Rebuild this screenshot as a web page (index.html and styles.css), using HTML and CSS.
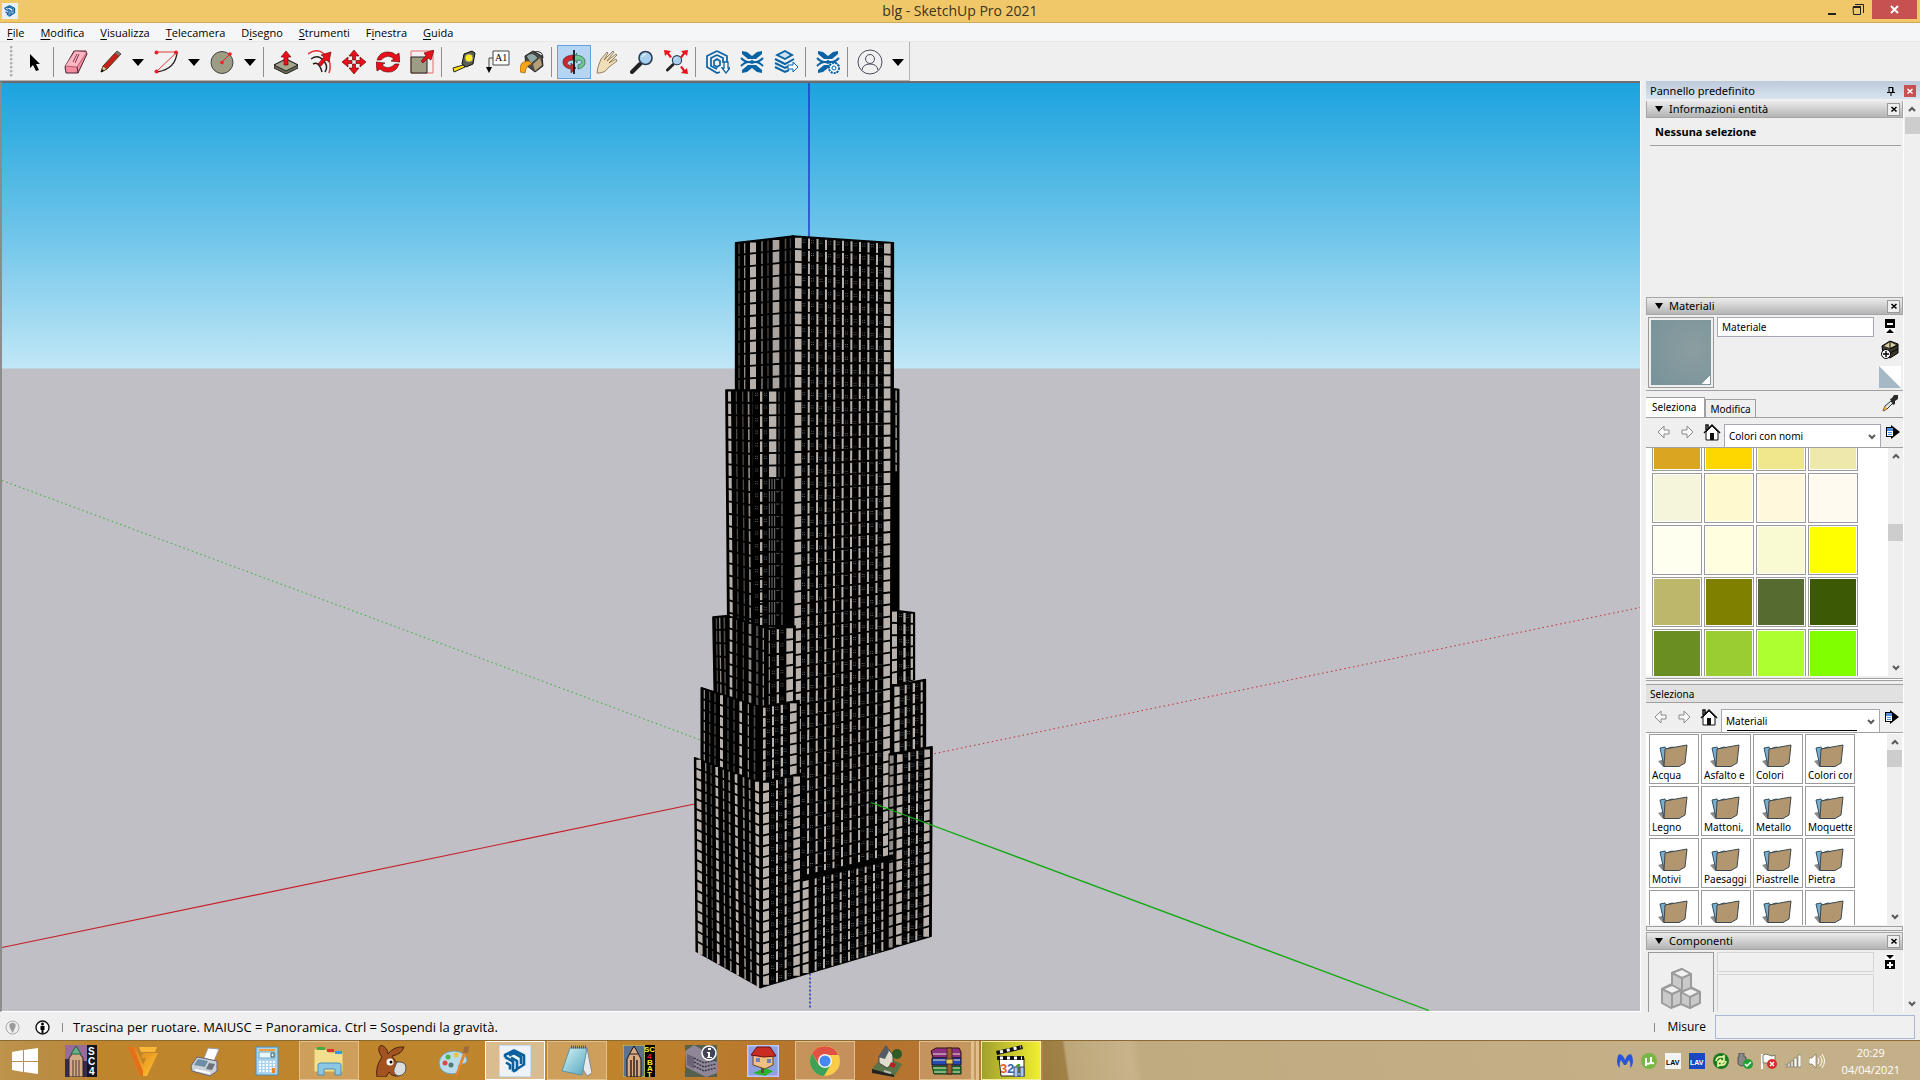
FILE: index.html
```
<!DOCTYPE html>
<html lang="it">
<head>
<meta charset="utf-8">
<title>blg - SketchUp Pro 2021</title>
<link rel="stylesheet" href="styles.css">
</head>
<body>
<svg class="defs" aria-hidden="true">
  <defs>
    <linearGradient id="sky" x1="0" y1="0" x2="0" y2="1">
      <stop offset="0" stop-color="#1ca3de"/><stop offset=".5" stop-color="#6ac3e9"/><stop offset="1" stop-color="#c0e7f6"/>
    </linearGradient>
    <linearGradient id="glass" x1="0" y1="0" x2="1" y2="1">
      <stop offset="0" stop-color="#d9f3f6"/><stop offset="1" stop-color="#4fa6bd"/>
    </linearGradient>
    <linearGradient id="gold" x1="0" y1="0" x2="1" y2="1">
      <stop offset="0" stop-color="#d9761c"/><stop offset="1" stop-color="#ffc52e"/>
    </linearGradient>
  </defs>
  <symbol id="logo" viewBox="0 0 24 24">
    <g fill="none" stroke="#0a5f9f" stroke-width="2.6" stroke-linejoin="round">
      <path d="M2 8v-2l9-4.500l10 5v9l-7 4.500v-8l-6-3.500"/><path d="M2 8l8 4.500v10"/><path d="M3 13.500l4 2.500v4.500M6 6.500l5-2.500l7 4v7"/><path d="M10 22.500l4-2"/>
    </g>
  </symbol>
  <symbol id="folder" viewBox="0 0 30 23">
    <path d="M0 17l7-2v8H5z" fill="#8b8b8b"/>
    <path d="M2 4l5-1l1 2l6-2l4 1l-8 18H6z" fill="#76afd3" stroke="#33505f"/>
    <path d="M7 5l22-4l-2 18l-6 3.500H6z" fill="#b29670" stroke="#3b4a50"/>
  </symbol>
  <symbol id="prev" viewBox="0 0 14 14"><path d="M1 7l6-6v4h5v4H7v4z" fill="#f8f8f8" stroke="#8a8a8a"/></symbol>
  <symbol id="next" viewBox="0 0 14 14"><path d="M13 7L7 1v4H2v4h5v4z" fill="#f8f8f8" stroke="#8a8a8a"/></symbol>
  <symbol id="home" viewBox="0 0 18 18">
    <path d="M3 9v8h12V9L9 3z" fill="#fff" stroke="#111"/><path d="M1 10L9 2l8 8M5 6V2H3v5" fill="none" stroke="#111" stroke-width="1.500"/><path d="M7 10h4v7H7z" fill="#111"/>
  </symbol>
  <symbol id="detail" viewBox="0 0 14 14">
    <path d="M0 2h5V0l9 7l-9 7v-2H0z" fill="#000"/><path d="M1 3h6v8H1z" fill="#fff"/><path d="M1 3h6v3H1z" fill="#4a8fe0"/><path d="M2 7.500h4M2 9.500h4" stroke="#4a8fe0"/>
  </symbol>
  <symbol id="up" viewBox="0 0 8 7"><path d="M1 5l3-3l3 3" fill="none" stroke="#5a5a5a" stroke-width="2"/></symbol>
  <symbol id="down" viewBox="0 0 8 7"><path d="M1 2l3 3l3-3" fill="none" stroke="#5a5a5a" stroke-width="2"/></symbol>
  <symbol id="cross" viewBox="0 0 8 8"><path d="M1.500 2l5 4.500M6.500 2l-5 4.500" stroke="currentColor" stroke-width="1.600"/></symbol>
  <symbol id="warehouse" viewBox="0 0 24 24">
    <path d="M2 1l5 1l5 4l5-4l5-1v3l-6 5H8L2 4zM2 23l5-1l5-4l5 4l5 1v-3l-6-5H8l-6 5z" fill="#0a63a5"/>
    <path d="M1 8q6 6 11 3q5 3 11-3M1 16q6-6 11-3q5-3 11 3" fill="none" stroke="#0a63a5" stroke-width="2"/>
  </symbol>
  <symbol id="lens" viewBox="0 0 24 24">
    <path d="M2 22l8-8" stroke="#222" stroke-width="4" stroke-linecap="round"/><circle cx="15.500" cy="8" r="6.500" fill="#a8d0ee" stroke="#2a3d55" stroke-width="1.600"/><path d="M12 7q1-3 4-3" stroke="#fff" fill="none"/>
  </symbol>
</svg>

<div class="window">
  <header class="titlebar">
    <svg class="app-icon" viewBox="0 0 16 16"><path d="M0 0h16v16H0z" fill="#e9f0f8"/><use href="#logo" x="2" y="2" width="12" height="12"/></svg>
    <h1 class="title">blg - SketchUp Pro 2021</h1>
    <div class="window-controls">
      <button class="control" aria-label="Riduci a icona"><svg width="10" height="12"><path d="M1 9h8v2H1z" fill="#222"/></svg></button>
      <button class="control" aria-label="Ripristina"><svg width="12" height="12" fill="none" stroke="#222"><path d="M1 3.500h7.500v7H1.500z"/><path d="M1 3h8" stroke-width="2"/><path d="M3 .5h8.500V9"/></svg></button>
      <button class="control control-close" aria-label="Chiudi"><svg width="9" height="9"><path d="M1 1l7 7M8 1L1 8" stroke="#fff" stroke-width="2"/></svg></button>
    </div>
  </header>

  <nav class="menubar">
    <button><u>F</u>ile</button><button><u>M</u>odifica</button><button><u>V</u>isualizza</button><button><u>T</u>elecamera</button><button>D<u>i</u>segno</button><button><u>S</u>trumenti</button><button>F<u>i</u>nestra</button><button><u>G</u>uida</button>
  </nav>

  <div class="toolbar">
    <div class="tools">
      <span class="grip"></span>
      <button class="tool" aria-label="Seleziona"><svg viewBox="0 0 24 24"><path d="M8 4v14l3-3l3 6l3-1l-3-6h4z" fill="#000"/></svg></button>
      <span class="sep"></span>
      <button class="tool" aria-label="Gomma"><svg viewBox="0 0 24 24"><path d="M10 1h12l1 3l-9 19H2l-1-6z" fill="#f58ba0" stroke="#4b2530"/><path d="M1 16l12 1l10-15l-12-1z" fill="#ffb5c3" stroke="#7d3b48" stroke-width=".6"/><path d="M13 17l1 6" stroke="#4b2530"/><path d="M11 13l4-9M9 12l4-8" stroke="#82404d"/></svg></button>
      <button class="tool" aria-label="Linee"><svg viewBox="0 0 24 24"><path d="M3 22l2-6L19 1l4 3L9 19z" fill="#c8201a" stroke="#431"/><path d="M3 22l2-6l4 3z" fill="#e2c890" stroke="#431" stroke-width=".6"/><path d="M3 22l1-3l2 2z"/><path d="M17 3l4 3l2-2l-4-3z" fill="#777"/></svg></button>
      <button class="drop" aria-label="Altre linee"></button>
      <button class="tool" aria-label="Arco"><svg viewBox="0 0 24 24" fill="none"><path d="M23 2q-1 17-20 20" stroke="#222" stroke-width="1.300"/><path d="M2 2h21L2 22" stroke="#e23a3a"/><g fill="#e8202a"><circle cx="2.500" cy="2.500" r="2"/><circle cx="22" cy="2.500" r="2"/><circle cx="2.500" cy="21.500" r="2"/></g></svg></button>
      <button class="drop" aria-label="Altri archi"></button>
      <button class="tool" aria-label="Cerchio"><svg viewBox="0 0 24 24"><circle cx="12" cy="12.500" r="11" fill="#9d9c85" stroke="#444"/><path d="M12 12l8-8" stroke="#e22"/><circle cx="12" cy="12.500" r="1.800" fill="#e22"/><circle cx="20" cy="4" r="1.800" fill="#e22"/></svg></button>
      <button class="drop" aria-label="Altre forme"></button>
      <span class="sep"></span>
      <button class="tool" aria-label="Spingi/tira"><svg viewBox="0 0 24 24"><path d="M0 15l12-6l12 6v3l-12 6l-12-6z" fill="#6b6a58" stroke="#222"/><path d="M0 15l12-6l12 6l-12 6z" fill="#a5a48d" stroke="#222"/><path d="M12 1l5 6h-3v8h-4V7H7z" fill="#e8101a" stroke="#600" stroke-width=".6"/></svg></button>
      <button class="tool" aria-label="Seguimi"><svg viewBox="0 0 24 24" fill="none"><path d="M0 4q8-6 15-1q10 8 6 20" stroke="#e8303a" stroke-width="1.500"/><path d="M3 9q7-5 12 1q6 6 2 12M5 14q6-3 9 8" stroke="#222" stroke-width="1.500"/><path d="M10 14l6-7l-3-2l10-3l-2 10l-3-2l-5 6z" fill="#e8101a" stroke="#500" stroke-width=".6"/></svg></button>
      <button class="tool" aria-label="Sposta"><svg viewBox="0 0 24 24" fill="#e8101a" stroke="#500" stroke-width=".6"><path d="M12 0l5 6h-3.500v4h-3V6H7zM12 24l5-6h-3.500v-4h-3v4H7zM0 12l6-5v3.500h4v3H6V17zM24 12l-6-5v3.500h-4v3h4V17z"/></svg></button>
      <button class="tool" aria-label="Ruota"><svg viewBox="0 0 24 24" fill="#e8101a" stroke="#500" stroke-width=".6"><path d="M1 10q3-9 12-8q4 0 7 3l3-2l1 9l-9-1l3-2q-6-6-13 1zM23 14q-3 9-12 8q-4 0-7-3l-3 2l-1-9l9 1l-3 2q6 6 13-1z"/></svg></button>
      <button class="tool" aria-label="Scala"><svg viewBox="0 0 24 24"><path d="M1 1h22v22H1z" fill="none" stroke="#e66"/><path d="M1 7h16v16H1z" fill="#9d9c85" stroke="#222"/><path d="M11 11l5-5l-2-3l10-3l-3 10l-3-2l-5 5z" fill="#e8101a" stroke="#500" stroke-width=".6"/></svg></button>
      <span class="sep"></span>
      <button class="tool" aria-label="Metro"><svg viewBox="0 0 24 24"><path d="M12 4l8-3l3 2l-2 11l-7 3l-4-3z" fill="#5b5b55" stroke="#111"/><circle cx="17" cy="8" r="4" fill="#ffee10" stroke="#888"/><path d="M2 22l-1-4l10-3l2 2z" fill="#ffe200" stroke="#222"/></svg></button>
      <button class="tool" aria-label="Testo"><svg viewBox="0 0 24 24"><path d="M7 1h16v14H7z" fill="#fff" stroke="#444"/><text x="9" y="11" class="text-icon">A1</text><path d="M7 8H3v10" fill="none" stroke="#444"/><path d="M0 17h6l-3 6z"/></svg></button>
      <button class="tool" aria-label="Secchiello"><svg viewBox="0 0 24 24"><path d="M5 6l8-5l9 5l1 10l-8 6l-9-7z" fill="#4c4d44" stroke="#222"/><path d="M6 6q7-6 12 2l-7 6q-3-5-5-8z" fill="#8fa7a5" stroke="#333"/><path d="M13 14l7-6l2 7l-7 6z" fill="#b7a078"/><path d="M14 2q9-2 9 6" fill="none" stroke="#222"/><path d="M0 22q-1-12 9-11l3 3q-6 1-7 9z" fill="#f5a41c" stroke="#8a5300" stroke-width=".6"/></svg></button>
      <span class="sep"></span>
      <button class="tool tool-active" aria-label="Orbita" aria-pressed="true"><svg viewBox="0 0 24 24"><path d="M11 5Q0 6 1 13q1 5 8 6v4l5-5l-5-5v3q-4-1-4-3q1-3 6-3z" fill="#c92a30" stroke="#511" stroke-width=".6"/><path d="M14 5q10 1 9 8q-1 5-7 6v-4q4-1 4-3q0-2-5-2v3l-4-5l4-5z" fill="#6fc794" stroke="#153" stroke-width=".6"/><path d="M12 0v24" stroke="#000" stroke-width="1.600"/></svg></button>
      <button class="tool" aria-label="Panoramica"><svg viewBox="0 0 24 24"><path d="M1 23l1-6l3-8l6-7l1 1l-4 7l9-9l1 1l-7 9l9-7l1 1l-8 8l7-4l1 2l-8 6q-4 6-9 6z" fill="#f1dfb8" stroke="#7a6648" stroke-width=".8"/></svg></button>
      <button class="tool" aria-label="Zoom"><svg><use href="#lens"/></svg></button>
      <button class="tool" aria-label="Zoom estensioni"><svg viewBox="0 0 24 24"><use href="#lens" x="2" y="4" width="17" height="18"/><path d="M0 0l7 1l-2 2l3 4l-2 1l-3-4l-2 2zM24 0l-7 1l2 2l-3 4l2 1l3-4l2 2zM24 24l-7-1l2-2l-3-4l2-1l3 4l2-2z" fill="#e8101a"/></svg></button>
      <span class="sep"></span>
      <button class="tool" aria-label="3D Warehouse"><svg viewBox="0 0 24 24" fill="none" stroke="#0a63a5" stroke-width="1.700"><path d="M11 1l10 5v8M14 22l-3 1L1 17V6l10-5M11 5l6 3v5M11 19l-6-3V8l6-3"/><path d="M11 9l3 2v4l-3 2l-3-2v-4z"/><path d="M18 12h4v6h2l-4 5l-4-5h2z" fill="#fff" stroke-width="1.300"/></svg></button>
      <button class="tool" aria-label="Extension Warehouse"><svg><use href="#warehouse"/></svg></button>
      <button class="tool" aria-label="Invia a LayOut"><svg viewBox="0 0 24 24"><path d="M1 5l10-5l9 5l-9 5z" fill="#0a63a5"/><path d="M5 5l6-3l5 3l-5 3z" fill="#cfe2f1"/><path d="M1 9l10 5l9-5M1 13l10 5l4-2M1 17l10 5l4-2" fill="none" stroke="#0a63a5" stroke-width="2"/><path d="M14 15h5v-3l5 5l-5 5v-3h-5z" fill="#fff" stroke="#0a63a5"/></svg></button>
      <span class="sep"></span>
      <button class="tool" aria-label="Gestione estensioni"><svg viewBox="0 0 24 24"><use href="#warehouse"/><circle cx="18" cy="18" r="5" fill="#fff" stroke="#0a63a5" stroke-width="2" stroke-dasharray="2 1"/><circle cx="18" cy="18" r="2" fill="none" stroke="#0a63a5"/></svg></button>
      <span class="sep"></span>
      <button class="tool" aria-label="Account"><svg class="account" viewBox="0 0 26 26" fill="none" stroke="#4b4b5a"><circle cx="13" cy="13" r="12"/><circle cx="13" cy="10" r="4.500"/><path d="M5 21q1-6 8-6t8 6"/></svg></button>
      <button class="drop" aria-label="Menu account"></button>
    </div>
  </div>

  <main class="workspace">
    <section class="viewport" aria-label="Modello">
      <svg class="scene" viewBox="2 83 1638 929" preserveAspectRatio="xMidYMid slice">
        <path d="M0 0h1700v1100H0z" fill="#bfbfc5"/>
        <rect x="0" y="83" width="1700" height="286" fill="url(#sky)"/>
        <g fill="none">
          <path d="M809 83v155" stroke="#1a3fc8" stroke-width="1.500"/>
          <path d="M810 970v40" stroke="#2a2ac8" stroke-width="1.500" stroke-dasharray="2 2"/>
          <path d="M2 481l700 260" stroke="#2ab52a" stroke-dasharray="1.500 3"/>
          <path d="M930 755l710-147" stroke="#c8283a" stroke-dasharray="1.500 3"/>
          <path d="M2 948l695-144" stroke="#c81e28" stroke-width="1.200"/>
        </g>
        <g id="tower" transform="translate(680 220) scale(.333333)"></g>
        <path d="M871 803l558 208" fill="none" stroke="#12a812" stroke-width="1.300"/>
      </svg>
    </section>

    <aside class="dock">
      <header class="dock-title"><h2>Pannello predefinito</h2>
        <svg class="pin" viewBox="0 0 8 9"><path d="M2 .5h4v5M2 0v5M0 5.500h8M4 6v3M5.500 0v5" fill="none" stroke="#000"/></svg>
        <button class="dock-close" aria-label="Chiudi pannello"><svg width="8" height="8"><use href="#cross"/></svg></button></header>
      <div class="dock-body">
        <div class="trays">
          <section class="tray tray-info">
            <header class="tray-head"><h3>Informazioni entità</h3><button aria-label="Chiudi"><svg width="8" height="8"><use href="#cross"/></svg></button></header>
            <p class="entity">Nessuna selezione</p>
          </section>

          <section class="tray">
            <header class="tray-head"><h3>Materiali</h3><button aria-label="Chiudi"><svg width="8" height="8"><use href="#cross"/></svg></button></header>
            <div class="material">
              <div class="preview"><span class="preview-fill"></span></div>
              <input class="field" aria-label="Nome materiale" value="Materiale">
              <div class="side-icons">
                <svg width="10" height="15"><path d="M0 0h10v9H0z"/><path d="M2 4h6v2H2z" fill="#fff"/><path d="M0 9h10v6H0z" fill="#fff"/><path d="M1 14l4-4l4 4z"/></svg>
                <svg width="18" height="20" viewBox="0 0 18 20"><path d="M1 6l8-5l8 3v9l-8 5l-7-4z" fill="#3b382b" stroke="#000"/><path d="M3 6l6-4l6 3l-6 3z" fill="#d8d0a5"/><path d="M9 9l8-4M9 13l8-4M9 2v6" stroke="#000"/><circle cx="5" cy="14" r="4.500" fill="#fff" stroke="#000"/><path d="M2 14h6M5 11v6" stroke="#000" stroke-width="1.400"/></svg>
                <svg width="22" height="22"><path d="M0 0h22v22z" fill="#fff"/><path d="M0 0l22 22H0z" fill="#a4b8c6"/></svg>
              </div>
            </div>
            <div class="tabs">
              <button class="tab tab-on">Seleziona</button><button class="tab">Modifica</button>
              <svg class="dropper" viewBox="0 0 17 17"><path d="M1 16l2-5l6-5l2 2l-6 6z" fill="#dfe6ea" stroke="#333"/><path d="M1 16l2-5l2 3z" fill="#f0a020"/><path d="M8 4l2-1l2-3h4v4l-3 2v3l-2 1z" fill="#2b2b2b"/></svg>
            </div>
            <div class="picker">
              <button aria-label="Indietro"><svg width="14" height="14"><use href="#prev"/></svg></button>
              <button aria-label="Avanti"><svg width="14" height="14"><use href="#next"/></svg></button>
              <button aria-label="Nel modello"><svg width="18" height="18"><use href="#home"/></svg></button>
              <span class="combo"><select aria-label="Raccolta"><option>Colori con nomi</option></select><svg width="8" height="7"><use href="#down"/></svg></span>
              <button aria-label="Dettagli"><svg width="14" height="14"><use href="#detail"/></svg></button>
            </div>
            <div class="list list-swatches">
              <div class="swatches" id="swatches"></div>
              <div class="scroll"><svg width="8" height="7"><use href="#up"/></svg><span class="thumb thumb-mid"></span><svg width="8" height="7"><use href="#down"/></svg></div>
            </div>
            <div class="splitter"></div>
            <h4 class="subhead">Seleziona</h4>
            <div class="picker picker-second">
              <button aria-label="Indietro"><svg width="14" height="14"><use href="#prev"/></svg></button>
              <button aria-label="Avanti"><svg width="14" height="14"><use href="#next"/></svg></button>
              <button aria-label="Nel modello"><svg width="18" height="18"><use href="#home"/></svg></button>
              <span class="combo combo-focus"><select aria-label="Cartella"><option>Materiali</option></select><svg width="8" height="7"><use href="#down"/></svg></span>
              <button aria-label="Dettagli"><svg width="14" height="14"><use href="#detail"/></svg></button>
            </div>
            <div class="list list-folders">
              <div class="folders" id="folders"></div>
              <div class="scroll"><svg width="8" height="7"><use href="#up"/></svg><span class="thumb"></span><svg width="8" height="7"><use href="#down"/></svg></div>
            </div>
            <div class="splitter splitter-low"></div>
          </section>

          <section class="tray tray-components">
            <header class="tray-head"><h3>Componenti</h3><button aria-label="Chiudi"><svg width="8" height="8"><use href="#cross"/></svg></button></header>
            <div class="material">
              <div class="preview preview-empty"><svg width="42" height="42" viewBox="0 0 42 42" stroke="#9b9b9b" stroke-width="2" stroke-linejoin="round"><path d="M12 6l10-4l9 5v13l9 5v11l-10 5l-9-4l-10 4l-9-5V22l10-5z" fill="#c9c9c9"/><path d="M12 6l10-4l9 5l-9 4zM2 22l10-4l9 5l-9 4zM21 25l10-4l9 4l-10 5z" fill="#f2f2f2"/><path d="M22 11v12M12 27v13M30 30v11M21 23v13" fill="none"/></svg></div>
              <div class="fields"><input class="field" aria-label="Nome componente" disabled><textarea class="field field-tall" aria-label="Descrizione" disabled></textarea></div>
              <div class="side-icons"><svg width="10" height="15"><path d="M0 6h10v9H0z"/><path d="M2 10h6v2H2z" fill="#fff"/><path d="M4 8h2v6H4z" fill="#fff"/><path d="M0 0h10v6H0z" fill="#fff"/><path d="M1 1h8l-4 4z"/></svg></div>
            </div>
          </section>
        </div>
        <div class="scroll scroll-main"><svg width="8" height="7"><use href="#up"/></svg><span class="thumb"></span><svg width="8" height="7"><use href="#down"/></svg></div>
      </div>
    </aside>
  </main>

  <footer class="status">
    <svg class="geo" width="15" height="15" viewBox="0 0 15 15"><circle cx="7.500" cy="7.500" r="6.500" fill="none" stroke="#a8a8a8"/><path d="M7.500 13L4.500 7V4l3-1.500l3 1.500v3z" fill="#9a9a9a"/></svg>
    <svg width="15" height="15" viewBox="0 0 15 15"><circle cx="7.500" cy="7.500" r="6.500" fill="#fff" stroke="#111" stroke-width="1.400"/><circle cx="7.500" cy="4" r="1.500"/><path d="M5.500 6h4v4h-1v3h-2v-3h-1z"/></svg>
    <span class="rule"></span>
    <p class="hint">Trascina per ruotare. MAIUSC = Panoramica. Ctrl = Sospendi la gravità.</p>
    <span class="rule"></span>
    <label for="measure">Misure</label><input id="measure" class="measure">
  </footer>
</div>

<div class="taskbar">
  <button class="start" aria-label="Start"><svg width="26" height="26" viewBox="0 0 26 26" fill="#fff"><path d="M0 4l11-2v11H0zM12 2l14-2v13H12zM0 14h11v10L0 22zM12 14h14v12l-14-2z"/></svg></button>
  <button class="task" aria-label="SimCity 4"><svg viewBox="0 0 32 32"><path d="M0 0h22v32H0z" fill="#9a6b98"/><path d="M0 14h5v18H0zM17 16h5v16h-5z" fill="#3a2a4d"/><path d="M22 0h10v32H22z" fill="#111520"/><path d="M4 13l3-4l4-8l4 8l3 4v19H4z" fill="#d0ab84" stroke="#2d1e25"/><path d="M6 9l5-8l5 8z" fill="#66b087" stroke="#264"/><path d="M8 15v17M11 15v17M14 15v17" stroke="#4e3032"/><g class="pixel-text"><text x="23" y="10">S</text><text x="23" y="20">C</text><text x="24" y="30">4</text></g></svg></button>
  <button class="task" aria-label="Vegas"><svg viewBox="0 0 32 32"><path d="M1 2h8l7 18l3-7h-5l2-5h15l-11 23h-7z" fill="url(#gold)"/><path d="M1 2h5l10 24v5h-3z" fill="#e36f1b"/><path d="M12 2h18l-2 5H14z" fill="#f8b63a"/></svg></button>
  <button class="task" aria-label="Fax"><svg viewBox="0 0 32 32"><path d="M15 13l4-10l11 1l-5 12z" fill="#fff" stroke="#99a"/><path d="M2 21l6-9l20 4v10l-7 5l-18-5z" fill="#cbd1d6" stroke="#667"/><path d="M9 14l10 2l-3 6l-11-2z" fill="#6c8ea8"/><path d="M20 18l6 1l-3 6l-6-1z" fill="#6b7278"/><path d="M6 25l15 3" stroke="#fff" stroke-width="2"/></svg></button>
  <button class="task" aria-label="Calcolatrice"><svg viewBox="0 0 32 32"><path d="M5 2h22v28H5z" fill="#a8d3f0" stroke="#4b8cb8"/><path d="M8 4h16v2H8z" fill="#f49b3a"/><path d="M8 7h16v6H8z" fill="#e8f5fb" stroke="#7ab"/><g stroke="#fff" stroke-width="2" stroke-dasharray="2 1.500"><path d="M8 17h16M8 20h16M8 23h16M8 26h16"/></g><path d="M21 23h3v5h-3z" fill="#f08020"/><path d="M20 8h3v4h-3z" fill="none" stroke="#357"/></svg></button>
  <button class="task task-open" aria-label="Esplora file"><svg viewBox="0 0 32 32"><path d="M1 4h12l2 3h15v20H1z" fill="#f3df8e" stroke="#c8a64a"/><path d="M4 2h8v3H4z" fill="#4a4"/><path d="M14 4h7v3h-7z" fill="#d33"/><path d="M22 6h7v3h-7z" fill="#39d"/><path d="M5 30V20q0-2 3-2h17q3 0 3 2v10h-6v-6H11v6z" fill="#8cc8e6" stroke="#4a90b8"/></svg></button>
  <button class="task" aria-label="eMule"><svg viewBox="0 0 32 32"><path d="M7 12Q1 4 6 0q7 3 7 9q6-8 16-7q-2 7-12 9l4 6q9 0 8 7q-1 8-9 7q-5-1-6-4l-3 5H2q-2-10 5-20z" fill="#a3531f" stroke="#4a2410"/><path d="M22 17q9-1 9 6t-8 8q-5-2-4-7z" fill="#ddd" stroke="#555"/><circle cx="15" cy="17" r="3.500" fill="#fff"/><circle cx="16" cy="17" r="1.500"/></svg></button>
  <button class="task" aria-label="Paint"><svg viewBox="0 0 32 32"><path d="M2 18Q3 7 17 6q12 1 13 9q0 4-6 4q-4 1-2 5q1 4-6 5Q3 29 2 18z" fill="#b9dbea" stroke="#6ea0b8"/><circle cx="8" cy="18" r="2.500" fill="#d84a4a"/><circle cx="11" cy="12" r="2.500" fill="#4eb04e"/><circle cx="19" cy="10" r="2.500" fill="#efc43c"/><circle cx="14" cy="20" r="2.500" fill="#577"/><path d="M18 31L26 8l3 1l-9 22z" fill="#e8842a"/><path d="M26 8l1-6l5-1l-1 7z" fill="#9b6a3e"/></svg></button>
  <button class="task task-front" aria-label="SketchUp"><svg viewBox="0 0 32 32"><path d="M0 0h32v32H0z" fill="#eef3fa" stroke="#9cc4e8"/><use href="#logo" x="4" y="4" width="24" height="24"/></svg></button>
  <button class="task task-open" aria-label="Blocco note"><svg viewBox="0 0 32 32"><path d="M9 3h17l5 25l-5 3z" fill="#e6eaec" stroke="#889"/><path d="M9 3h17l-5 27L1 26z" fill="url(#glass)" stroke="#5c93a3"/><path d="M10 2h16" stroke="#555" stroke-width="3" stroke-dasharray="1 1"/></svg></button>
  <button class="task" aria-label="SC4 BAT"><svg viewBox="0 0 32 32"><path d="M0 0h22v32H0z" fill="#5a7390" stroke="#f0e020"/><path d="M22 0h10v32H22z"/><path d="M4 14l3-6l4-7l4 7l3 6v18H4z" fill="#d8ab84" stroke="#181018"/><path d="M8 15v17M11 11v21M14 15v17" stroke="#201820" stroke-width="1.400"/><path d="M7 9h8" stroke="#201820"/><g class="pixel-text bat"><text x="21" y="7">SC</text><text x="24" y="14" class="red">4</text><text x="24" y="20">B</text><text x="24" y="26">A</text><text x="24" y="32">T</text></g></svg></button>
  <button class="task" aria-label="Informazioni edificio"><svg viewBox="0 0 32 32"><path d="M0 0h32v32H0z" fill="#56604c"/><path d="M0 6l9-6l7 4l2 8l14 5v11l-11 4L1 22z" fill="#8f8697"/><path d="M2 9l7 3v12L2 20z" fill="#6b6276"/><path d="M9 13l10 5l12-3M9 17l10 5l12-3M9 21l10 5l12-3" stroke="#3d3848" stroke-width="1.500" fill="none" stroke-dasharray="2 1"/><circle cx="24" cy="8" r="7" fill="#445" stroke="#fff" stroke-width="1.500"/><path d="M23 3h3v2h-3zM22 7h3v5h2v1h-5v-1h1V8h-1z" fill="#fff"/></svg></button>
  <button class="task" aria-label="Casa"><svg viewBox="0 0 32 32"><path d="M0 0h32v32H0z" fill="#8f9fe0" stroke="#bcc7ff" stroke-width="3"/><path d="M6 28l12-5l8 3l-8 5z" fill="#28b52a"/><path d="M14 21h3v7h-3z" fill="#743"/><path d="M6 10h20v10l-8 4l-12-4z" fill="#f0bf82" stroke="#642"/><path d="M4 10l6-8h13l6 9l-12 1z" fill="#c92c22" stroke="#611"/><path d="M9 13h4v4H9zM20 14h4v4h-4z" fill="#6c80bb"/></svg></button>
  <button class="task task-open" aria-label="Chrome"><svg viewBox="0 0 32 32"><circle cx="16" cy="16" r="15" fill="#f9cd47"/><path d="M3 8.500A15 15 0 0 1 29.500 10H16l-6 9z" fill="#e05144"/><path d="M3 8.500A15 15 0 0 0 15 31l7-12l-12 1z" fill="#3ba257"/><circle cx="16" cy="16" r="7" fill="#f5f5f5"/><circle cx="16" cy="16" r="5.500" fill="#4688f1"/></svg></button>
  <button class="task" aria-label="Lot Editor"><svg viewBox="0 0 32 32"><path d="M1 24l11-13l19 8l-8 13z" fill="#5a7348"/><path d="M1 24l22 6v2L1 28z" fill="#222"/><path d="M8 12l7-11l7 9v9l-6 4l-8-5z" fill="#e0dccf" stroke="#444"/><path d="M7 12l8-12l3 6l-4 8z" fill="#555b63"/><circle cx="26" cy="9" r="5" fill="#2e5a26"/><path d="M20 17l5 2l-2 4l-5-2z" fill="#b82020"/><path d="M13 26l7 2" stroke="#bbb" stroke-width="2"/></svg></button>
  <button class="task task-open task-stack" aria-label="WinRAR"><svg viewBox="0 0 32 32"><path d="M1 6l5-3h23l2 4v6H3z" fill="#8b2f80" stroke="#311"/><path d="M2 13h29v7H2z" fill="#264bb5" stroke="#113"/><path d="M2 21h29v8H4z" fill="#268035" stroke="#131"/><path d="M3 15h27M3 23h27M4 27h26M3 9h27" stroke="#e9dfca"/><path d="M17 3h5v26h-5z" fill="#9b5c2b" stroke="#422"/><path d="M16 14h7v5h-7z" fill="#e5c94a" stroke="#433"/></svg></button>
  <button class="task task-open task-alert" aria-label="Media Player Classic"><svg viewBox="0 0 32 32"><path d="M4 13h25v18H6z" fill="#fff" stroke="#222"/><path d="M2 11h27v4H2zM1 6L27 0l1 4L2 10z" fill="#111"/><path d="M5 7l21-5M5 13h22" stroke="#fff" stroke-width="3" stroke-dasharray="3 4"/><g class="clap-text"><text x="5" y="28" fill="#e66020">3</text><text x="12" y="28" fill="#36a">2</text><text x="20" y="28" fill="#292">1</text></g><path d="M19 22h4v10h-4zM25 22h4v10h-4z" fill="#a8c8f0" stroke="#347"/></svg></button>
  <div class="desktop-strip"></div>
  <div class="systray">
    <svg viewBox="0 0 16 16"><path d="M2 1q4 0 6 6q2-6 6-6q2 3 2 7q0 5-3 7q1-5-1-8l-3 5H7L4 7q-2 3-1 8q-3-2-3-7q0-4 2-7z" fill="#2854d8"/></svg>
    <svg viewBox="0 0 16 16"><circle cx="8" cy="8" r="8" fill="#74b843"/><path d="M5 13V5v5q3 2 5-1V4v5q0 2 3 1" stroke="#fff" stroke-width="2" fill="none"/></svg>
    <svg viewBox="0 0 16 16"><path d="M0 0h16v16H0z" fill="#f3f3f3"/><text x="1" y="12" class="lav">LAV</text></svg>
    <svg viewBox="0 0 16 16"><path d="M0 0h16v16H0z" fill="#1848c0"/><text x="1" y="12" class="lav lav-light">LAV</text></svg>
    <svg viewBox="0 0 16 16"><circle cx="8" cy="8" r="8" fill="#1c7a25"/><path d="M3 8q1-5 6-4l2-1v5H6l2-2M13 8q-1 5-6 4l-2 1V9h5l-2 2" fill="none" stroke="#e3f3a0" stroke-width="1.700"/></svg>
    <svg viewBox="0 0 16 16"><path d="M2 0h5v4h2v7q-4 4-8 0V4h1z" fill="#888" stroke="#555"/><circle cx="11" cy="11" r="5" fill="#20a030"/><path d="M8 11l2 2l4-4" stroke="#fff" stroke-width="1.500" fill="none"/></svg>
    <svg viewBox="0 0 16 16"><path d="M1 1v15" stroke="#fff" stroke-width="2"/><path d="M2 2q3-2 6 0t6 0v8H2z" fill="#fff" stroke="#776"/><circle cx="11" cy="11" r="5" fill="#d82a2a"/><path d="M9 9l4 4M13 9l-4 4" stroke="#fff" stroke-width="1.500"/></svg>
    <svg viewBox="0 0 16 16" fill="#fff" stroke="#665" stroke-width=".6"><path d="M0 12h2v2H0zM3 10h2v4H3zM6 8h2v6H6zM9 5h3v9H9zM13 2h3v12h-3z"/></svg>
    <svg viewBox="0 0 16 16"><path d="M0 5h3l4-4v14l-4-4H0z" fill="#fff" stroke="#665" stroke-width=".6"/><path d="M9 5q2 3 0 6M11 3q4 5 0 10M13 1q5 7 0 14" fill="none" stroke="#fff"/></svg>
    <time class="clock"><span>20:29</span><span>04/04/2021</span></time>
  </div>
</div>
<script src="app.js"></script>
</body>
</html>
```
FILE: styles.css
```
* { box-sizing: border-box; }
body {
  margin: 0;
  height: 100vh;
  display: flex;
  flex-direction: column;
  overflow: hidden;
  background: #efefef;
  color: #000;
  font: 11px/16px "Noto Sans", "Open Sans", sans-serif;
}
h1, h2, h3, h4, p { margin: 0; font: inherit; }
button, input, select, textarea { font: inherit; color: inherit; margin: 0; }
button { padding: 0; border: 0; background: none; }
svg { display: block; flex: none; }
.defs { position: absolute; width: 0; height: 0; }
.window { flex: 1; min-height: 0; display: flex; flex-direction: column; }

/* Title bar and menus */
.titlebar {
  height: 23px;
  display: grid;
  grid-template-columns: 1fr auto 1fr;
  align-items: center;
  background: #f0c869;
  border-bottom: 1px solid #cfa95a;
}
.app-icon { width: 16px; height: 16px; margin-left: 2px; }
.title { font: 14px/22px "Open Sans", sans-serif; color: #3a3320; }
.window-controls { justify-self: end; align-self: start; display: flex; padding-right: 3px; }
.control { width: 26px; height: 19px; display: grid; place-items: center; }
.control-close { width: 45px; margin-left: 1px; background: #c75050; }
.menubar {
  height: 19px;
  display: flex;
  gap: 16px;
  padding-left: 7px;
  background: #f5f6f8;
  border-bottom: 1px solid #e6e7e9;
  font: 11px/20px "Open Sans", sans-serif;
}
.menubar button { white-space: nowrap; }
.menubar u { text-underline-offset: 2px; }

/* Toolbar */
.toolbar { height: 39px; display: flex; }
.tools {
  display: flex;
  align-items: center;
  padding: 2px 0 0 10px;
  background: #f1f1f1;
  border: solid #b5b5b5;
  border-width: 0 1px 1px 0;
}
.grip { width: 7px; height: 32px; background: radial-gradient(circle at 1px 1px, #b0b0b0 1px, transparent 2px) 0 0 / 7px 4px; }
.tool { width: 34px; height: 34px; display: grid; place-items: center; border: 1px solid transparent; }
.tool svg { width: 24px; height: 24px; }
.tool .account { width: 26px; height: 26px; }
.tool-active { background: #b5d5f5; border-color: #63a2e0; }
.drop { width: 22px; height: 34px; display: grid; place-items: center; }
.drop::before { content: ""; border: 6px solid transparent; border-top: 7px solid #000; border-bottom: 0; }
.sep { width: 8px; height: 30px; background: linear-gradient(#8f8f8f, #8f8f8f) 2px 0 / 1px 100% no-repeat; }
.text-icon { font: 10px "Liberation Serif", serif; }

/* Work area */
.workspace { flex: 1; min-height: 0; display: flex; }
.viewport { flex: 1; min-width: 0; border: solid #6d6d6d; border-width: 2px 0 0 2px; border-left-color: #8c8c8c; border-bottom: 1px solid #fff; }
.scene { width: 100%; height: 100%; }

/* Dock */
.dock { width: 280px; padding-left: 5px; display: flex; flex-direction: column; border-left: 1px solid #fff; }
.dock-title {
  height: 18px;
  display: flex;
  align-items: center;
  gap: 9px;
  padding: 2px 4px 0;
  background: linear-gradient(#bccada, #d8e4f0);
}
.dock-title h2 { flex: 1; }
.pin { width: 8px; height: 9px; }
.dock-close { width: 12px; height: 12px; display: grid; place-items: center; background: #c75050; color: #fff; }
.dock-body { flex: 1; min-height: 0; display: flex; padding-top: 2px; }
.trays { flex: 1; min-width: 0; display: flex; flex-direction: column; overflow: hidden; border-right: 1px solid #fff; font-size: 10px; }
.tray-info { height: 196px; flex: none; }
.tray-info .tray-head { height: 17px; border-top: 0; }
.tray-components { flex: 1; min-height: 0; overflow: hidden; }
.tray-head {
  height: 18px;
  display: flex;
  align-items: center;
  padding: 0 2px 0 8px;
  background: linear-gradient(#ececec, #b4b4b4);
  border: 1px solid #a5a5a5;
  font-size: 11px;
}
.tray-head::before { content: ""; border: 4px solid transparent; border-top: 6px solid #000; border-bottom: 0; }
.tray-head h3 { flex: 1; padding-left: 6px; }
.tray-head button { width: 13px; height: 13px; display: grid; place-items: center; background: #eee; border: 1px solid #999; }
.entity { margin: 0 2px 0 4px; padding: 6px 5px; height: 28px; font-size: 11px; font-weight: 700; border-bottom: 1px solid #a0a0a0; }
.material { display: flex; gap: 3px; padding: 2px 0 2px 2px; height: 76px; border-bottom: 1px solid #a0a0a0; }
.preview { width: 66px; height: 71px; padding: 2px; border: 1px solid #9a9a9a; }
.preview-fill {
  display: block;
  height: 100%;
  background: linear-gradient(135deg, transparent 50%, #fff 50%) right 1px bottom 1px / 8px 8px no-repeat, radial-gradient(circle at 70% 45%, #8c9da0, #78949a 90%);
}
.preview-empty { display: grid; place-items: center; border-bottom: 0; }
.field { flex: 1; min-width: 0; height: 20px; padding: 0 4px; background: #fff; border: 1px solid #a5a8b0; border-radius: 0; resize: none; }
.fields { flex: 1; min-width: 0; display: flex; flex-direction: column; gap: 2px; }
.fields .field { flex: none; width: 100%; background: #f0f0f0; border-color: #d5d5d5; }
.fields .field-tall { height: 52px; }
.side-icons { width: 26px; display: flex; flex-direction: column; align-items: center; gap: 6px; padding-top: 2px; }
.tray-components .material { border-bottom: 0; }
.tabs { height: 27px; display: flex; align-items: flex-end; border-bottom: 1px solid #a0a0a0; }
.tab { height: 18px; padding: 0 4px; border: 1px solid #a0a0a0; border-bottom: 0; }
.tab-on { height: 20px; padding: 0 8px 2px 6px; background: #fff; border-left: 0; }
.dropper { width: 17px; height: 17px; margin: 0 4px 5px auto; }
.picker { height: 30px; display: flex; align-items: center; gap: 9px; padding: 0 3px 0 11px; border-bottom: 1px solid #a0a0a0; }
.picker button { padding-bottom: 2px; }
.combo { position: relative; flex: 1; align-self: flex-end; height: 23px; margin: 0 -4px 0 -6px; background: #fff; border: 1px solid #a5a8b0; border-bottom: 0; display: flex; align-items: center; }
.combo select { appearance: none; width: 100%; height: 22px; padding: 0 20px 0 4px; border: 0; background: none; outline: 0; }
.combo svg { position: absolute; right: 4px; }
.picker-second { padding: 0 4px 0 8px; }
.combo-focus::after { content: ""; position: absolute; left: 5px; right: 22px; bottom: 1px; height: 1px; background: #000; }
.list { display: flex; overflow: hidden; background: #fff; }
.list-swatches { height: 228px; padding-left: 6px; }
.list-folders { height: 192px; padding: 1px 1px 0 3px; }
.swatches, .folders { flex: 1; display: grid; grid-template-columns: repeat(4, 50px); grid-auto-rows: 50px; gap: 2px; }
.swatches { margin-top: -27px; }
.swatch, .folder { border: 1px solid #9a9a9a; background: #fff; }
.swatch { padding: 1px; background-clip: content-box; }
.folder { display: flex; flex-direction: column; align-items: center; overflow: hidden; padding-top: 9px; }
.folder svg { margin-right: 2px; }
.folder span { align-self: stretch; margin: 0 2px; overflow: hidden; white-space: nowrap; text-align: left; }
.scroll { width: 15px; display: flex; flex-direction: column; align-items: center; background: #efefef; padding: 5px 0; }
.scroll svg:last-child { margin-top: auto; }
.thumb { width: 15px; height: 17px; margin-top: 4px; background: #cdcdcd; }
.thumb-mid { margin-top: 64px; }
.scroll-main { width: 16px; }
.splitter { height: 7px; margin-top: 2px; border: solid #a0a0a0; border-width: 1px 0; box-shadow: inset 0 1px #fff, inset 0 2px #a0a0a0; }
.splitter-low { height: 5px; margin: 1px 0; border-width: 1px; box-shadow: none; }
.subhead { height: 18px; padding-left: 4px; background: #e1e1e1; border-bottom: 1px solid #a0a0a0; line-height: 18px; }

/* Status bar */
.status { height: 28px; display: flex; align-items: center; gap: 12px; padding: 2px 0 0 5px; font: 13px/18px "Open Sans", sans-serif; }
.geo { margin-right: 3px; }
.rule { width: 1px; height: 9px; background: #888; }
.hint { flex: 1; margin-left: -2px; }
.status label { font-size: 12px; }
.measure { width: 200px; height: 24px; margin: 0 5px 0 -3px; background: #f0f0f0; border: 1px solid #a9b8d4; }

/* Taskbar */
.taskbar {
  height: 40px;
  flex: none;
  display: flex;
  gap: 2px;
  border-top: 1px solid #8d6a34;
  background: linear-gradient(90deg, #bd934d 0, #b9883c 80px, #bf852c 90px, #bf852c 600px, #b4702d 860px, #b67a34 980px, #b28a45 1060px);
}
.start { width: 49px; display: grid; place-items: center; }
.task { width: 60px; height: 39px; display: grid; place-items: center; border: 1px solid transparent; }
.task svg { width: 32px; height: 32px; }
.task-open { background: rgba(255, 255, 255, .22); border-color: #e0c08c; }
.task-front { background: #d9bd90; border: 1px solid #fff; }
.task-stack { border-right: 8px double #e0c08c; }
.task-alert { background: linear-gradient(90deg, #a2a02c, #f0ee30); border-color: #f2ee9a; }
.desktop-strip { flex: 1; background: linear-gradient(82deg, #9c7c40 0, #a08248 24px, #bda779 27px, #c7b48c 90px, #bfab80 100px, #c4b088); }
.systray { display: flex; align-items: center; gap: 8px; margin-left: -2px; padding-right: 20px; background: #c4b088; }
.systray svg { width: 16px; height: 16px; }
.clock { display: flex; flex-direction: column; align-items: center; margin-left: 9px; font: 11px/17px "Open Sans", sans-serif; color: #fff; }
.pixel-text { font: bold 10px "Liberation Sans", sans-serif; fill: #fff; }
.pixel-text.bat { font-size: 8px; fill: #ffee20; }
.pixel-text .red { fill: #f02020; }
.clap-text { font: bold 13px "Liberation Sans", sans-serif; }
.lav { font: bold 7px "Liberation Sans", sans-serif; }
.lav-light { fill: #fff; }
```
FILE: app.js
```
const NS = 'http://www.w3.org/2000/svg';
const tower = document.getElementById('tower');

function path(d, attrs) {
  const el = document.createElementNS(NS, 'path');
  el.setAttribute('d', d);
  for (const key in attrs) el.setAttribute(key, attrs[key]);
  tower.appendChild(el);
}

// One wall of the tower. x: [left, right]; top and bottom: [left y, right y].
// piers: [x, width, colour]; panes: x of each column of small windows.
function wall(x, top, bottom, floors, piers, panes = [], lean = 0) {
  const f = (v) => (v - x[0]) / (x[1] - x[0]);
  const yTop = (v) => top[0] + (top[1] - top[0]) * f(v);
  const yBot = (v) => bottom[0] + (bottom[1] - bottom[0]) * f(v);
  path(`M${x[0]} ${top[0]}L${x[1]} ${top[1]}L${x[1] + lean} ${bottom[1]}L${x[0] + lean} ${bottom[0]}Z`,
    { fill: '#000', stroke: '#000', 'stroke-width': 5, 'stroke-linejoin': 'round' });
  for (const [px, w, colour] of piers) {
    path(`M${px} ${yTop(px) + 4}h${w}L${px + w + lean} ${yBot(px + w)}h${-w}Z`, { fill: colour || '#b8b0aa' });
  }
  const floor = (bottom[0] - top[0]) / floors;
  for (const px of panes) {
    path(`M${px} ${yTop(px) + 8}L${px + lean} ${yBot(px)}`,
      { stroke: '#54626a', 'stroke-width': 9, 'stroke-dasharray': `2.500 4 3 ${floor - 9.5}` });
    path(`M${px} ${yTop(px)}L${px + lean} ${yBot(px)}`, { stroke: '#000', 'stroke-width': 2.5 });
  }
  let d = '';
  for (let i = 1; i < floors; i++) {
    const t = i / floors;
    d += `M${x[0] + lean * t} ${top[0] + (bottom[0] - top[0]) * t}L${x[1] + lean * t} ${top[1] + (bottom[1] - top[1]) * t}`;
  }
  path(d, { stroke: '#000', 'stroke-width': 5.5, fill: 'none' });
}

const run = (start, step, n) => Array.from({ length: n }, (_, i) => start + step * i);
const thin = (xs, w = 6, c) => xs.map((v) => [v, w, c]);
const dim = '#4c4845';
const mid = '#8f8883';

// Shaft
wall([167, 340], [70, 50], [1000, 1000], 25,
  [[175, 4, dim], [192, 4, mid], [210, 18], [244, 4, mid], [262, 4, dim], [278, 20, '#aaa29c'], [314, 5, dim], [329, 5, '#333']]);
wall([337, 640], [50, 70], [1995, 1912], 51,
  [[345, 20], ...thin(run(384, 25.5, 9)), [612, 20]], run(372, 25.6, 10), -3);

// Second setback
wall([640, 656], [508, 510], [1180, 1180], 18, [[646, 5, mid]]);
path('M640 755h16v420h-16Z', { fill: '#000' });
wall([138, 222], [512, 512], [1400, 1435], 24,
  [[144, 9], [167, 4, dim], [186, 4, dim], [203, 5, mid], [216, 4, dim]], [], 7);
wall([220, 338], [512, 512], [1230, 1225], 19,
  [[240, 7], [267, 22], [295, 4, dim], [312, 4, dim]], [230, 256]);
path('M264 775h56v448h-56Z', { fill: '#000' });
for (const v of [268, 276, 284, 306]) path(`M${v} 778v445`, { stroke: '#777', 'stroke-width': 3 });
path('M293 778v445', { stroke: '#54626a', 'stroke-width': 9, 'stroke-dasharray': '3 34' });
path(run(812, 37, 12).map((v) => `M222 ${v}h116`).join(''), { stroke: '#000', 'stroke-width': 5 });

// Third setback
wall([99, 145], [1193, 1188], [1425, 1440], 6, [[107, 4, dim], [117, 4, mid], [130, 5, dim]], [], 4);
wall([145, 258], [1190, 1225], [1440, 1475], 7,
  [[149, 8], [168, 4, dim], [188, 4, dim], [206, 8, mid], [228, 7, dim], [248, 4, mid]]);
wall([258, 345], [1228, 1220], [1468, 1450], 6, [[266, 4, mid], [290, 7], [319, 20]], [280, 306]);
wall([634, 703], [1172, 1180], [1398, 1380], 6, [[636, 15], [670, 7], [692, 7]], [662, 683]);

// Fourth setback
wall([64, 240], [1405, 1462], [1630, 1700], 7,
  [[71, 4, mid], [87, 4, dim], [103, 4, dim], [120, 9], [142, 4, dim], [160, 4, dim], [178, 8], [203, 4, mid], [221, 5, dim]]);
wall([240, 357], [1462, 1443], [1690, 1665], 7, [[249, 8], [276, 6], [302, 7], [330, 20]], [265, 290, 315]);
wall([640, 736], [1398, 1380], [1604, 1582], 6, [[643, 16], [674, 6], [698, 7], [722, 6]], [666, 686, 710]);

// Base
wall([44, 238], [1615, 1688], [2195, 2304], 19,
  [[49, 14], [75, 4, mid], [91, 4, dim], [106, 8], [128, 4, mid], [145, 5, mid], [164, 8], [188, 5, mid], [206, 5, mid], [225, 13]], [], 5);
wall([240, 362], [1688, 1662], [2304, 2268], 19,
  [[249, 18], [288, 6], [314, 6], [340, 20]], [278, 302, 328]);
wall([362, 640], [1978, 1913], [2268, 2185], 9,
  [[368, 18], ...thin(run(404, 25, 9)), [624, 16]], run(418, 25, 8));
wall([628, 756], [1604, 1582], [2188, 2150], 18,
  [[629, 12, '#8f8985'], [651, 17], [685, 6], [709, 6], [733, 17]], [678, 699, 723], -3);
path('M362 1978L640 1913', { stroke: '#000', 'stroke-width': 18 });

const colours = [
  '#daa520', '#ffd700', '#f0e68c', '#eee8aa',
  '#f5f5dc', '#fffacd', '#fff8dc', '#fffaf0',
  '#fffff0', '#ffffe0', '#fafad2', '#ffff00',
  '#bdb76b', '#808000', '#556b2f', '#3c5a05',
  '#6b8e23', '#9acd32', '#adff2f', '#7fff00',
];
document.getElementById('swatches').innerHTML = colours
  .map((c) => `<button class="swatch" aria-label="${c}" style="background-color:${c}"></button>`).join('');

const folders = ['Acqua', 'Asfalto e', 'Colori', 'Colori con', 'Legno', 'Mattoni,', 'Metallo', 'Moquette',
  'Motivi', 'Paesaggi', 'Piastrelle', 'Pietra', '', '', '', ''];
document.getElementById('folders').innerHTML = folders
  .map((n) => `<button class="folder"><svg width="30" height="23"><use href="#folder"/></svg><span>${n}</span></button>`).join('');
```
